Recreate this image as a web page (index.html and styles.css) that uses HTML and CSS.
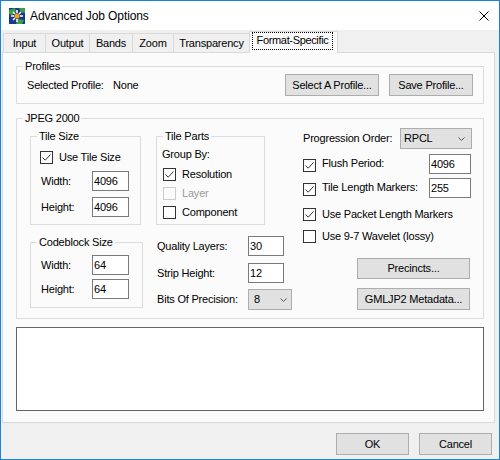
FILE: index.html
```html
<!DOCTYPE html>
<html>
<head>
<meta charset="utf-8">
<title>Advanced Job Options</title>
<link rel="stylesheet" href="styles.css">
</head>
<body>
<div class="window">
  <div class="titlebar">
    <svg class="appicon" viewBox="0 0 16 16">
      <rect width="16" height="16" fill="#17398c"/>
      <path d="M0 2 L6 0 L7 4 L3 7 L0 6 Z" fill="#3c9e46"/>
      <path d="M10 0 L16 0 L16 5 L12 4 Z" fill="#3c9e46"/>
      <path d="M9 11 L15 12 L13 16 L7 16 Z" fill="#3c9e46"/>
      <path d="M8 2 V5 M8 11 V14 M2 8 H5 M11 8 H14 M4 4 L6 6 M12 4 L10 6 M4 12 L6 10" stroke="#ffffff" stroke-width="1.6"/>
      <circle cx="8" cy="8" r="2.6" fill="#f0a21e"/>
    </svg>
    <span class="title">Advanced Job Options</span>
    <svg class="close" viewBox="0 0 10 10">
      <path d="M0.5 0.5 L9.5 9.5 M9.5 0.5 L0.5 9.5" stroke="#000" stroke-width="1" fill="none"/>
    </svg>
  </div>
  <div class="client">
    <div class="tabstrip">
      <div class="tab t-input">Input</div>
      <div class="tab t-output">Output</div>
      <div class="tab t-bands">Bands</div>
      <div class="tab t-zoom">Zoom</div>
      <div class="tab t-trans">Transparency</div>
      <div class="tab active t-format"><span class="focus">Format-Specific</span></div>
    </div>
    <div class="tabpage">
      <div class="group g-profiles">
        <span class="gtitle">Profiles</span>
        <span class="w-sel">Selected Profile:</span>
        <span>None</span>
        <button class="btn b-select">Select A Profile...</button>
        <button class="btn b-save">Save Profile...</button>
      </div>

      <div class="group g-jpeg">
        <span class="gtitle">JPEG 2000</span>

        <div class="col col-left">
          <div class="group g-tilesize">
            <span class="gtitle">Tile Size</span>
            <div class="chk r-usetile"><span class="box"><svg viewBox="0 0 11 11"><path d="M1.5 5.5 L4.2 8.2 L9.5 2.5" stroke="#333" stroke-width="1" fill="none"/></svg></span>Use Tile Size</div>
            <div class="field r-w1"><span class="flabel fl-l">Width:</span><span class="input in-l">4096</span></div>
            <div class="field r-h1"><span class="flabel fl-l">Height:</span><span class="input in-l">4096</span></div>
          </div>
          <div class="group g-codeblock">
            <span class="gtitle">Codeblock Size</span>
            <div class="field r-w2"><span class="flabel fl-l">Width:</span><span class="input in-l">64</span></div>
            <div class="field r-h2"><span class="flabel fl-l">Height:</span><span class="input in-l">64</span></div>
          </div>
        </div>

        <div class="col col-mid">
          <div class="group g-tileparts">
            <span class="gtitle">Tile Parts</span>
            <div class="groupby">Group By:</div>
            <div class="chk r-tp r-res"><span class="box"><svg viewBox="0 0 11 11"><path d="M1.5 5.5 L4.2 8.2 L9.5 2.5" stroke="#333" stroke-width="1" fill="none"/></svg></span>Resolution</div>
            <div class="chk r-tp disabled"><span class="box"></span>Layer</div>
            <div class="chk r-tp"><span class="box"></span>Component</div>
          </div>
          <div class="field r-ql"><span class="flabel fl-m">Quality Layers:</span><span class="input in-m">30</span></div>
          <div class="field r-sh"><span class="flabel fl-m">Strip Height:</span><span class="input in-m">12</span></div>
          <div class="field r-bp"><span class="flabel fl-m">Bits Of Precision:</span><span class="combo cb-bits">8<svg class="chev" viewBox="0 0 7 4"><path d="M0.5 0.5 L3.5 3.5 L6.5 0.5" stroke="#555" fill="none"/></svg></span></div>
        </div>

        <div class="col col-right">
          <div class="field r-po"><span>Progression Order:</span><span class="combo cb-po">RPCL<svg class="chev" viewBox="0 0 7 4"><path d="M0.5 0.5 L3.5 3.5 L6.5 0.5" stroke="#555" fill="none"/></svg></span></div>
          <div class="field rr r-fp"><span class="box"><svg viewBox="0 0 11 11"><path d="M1.5 5.5 L4.2 8.2 L9.5 2.5" stroke="#333" stroke-width="1" fill="none"/></svg></span><span>Flush Period:</span><span class="input in-r">4096</span></div>
          <div class="field rr r-tl"><span class="box"><svg viewBox="0 0 11 11"><path d="M1.5 5.5 L4.2 8.2 L9.5 2.5" stroke="#333" stroke-width="1" fill="none"/></svg></span><span>Tile Length Markers:</span><span class="input in-r">255</span></div>
          <div class="chk r-pl"><span class="box"><svg viewBox="0 0 11 11"><path d="M1.5 5.5 L4.2 8.2 L9.5 2.5" stroke="#333" stroke-width="1" fill="none"/></svg></span>Use Packet Length Markers</div>
          <div class="chk r-wv"><span class="box"></span>Use 9-7 Wavelet (lossy)</div>
          <button class="btn b-prec">Precincts...</button>
          <button class="btn b-gml">GMLJP2 Metadata...</button>
        </div>
      </div>

      <div class="textbox"></div>
    </div>
    <div class="footer">
      <button class="btn b-ok">OK</button>
      <button class="btn b-cancel">Cancel</button>
    </div>
  </div>
</div>
</body>
</html>
```

FILE: styles.css
```css
html, body {
  margin: 0;
  padding: 0;
  background: #ffffff;
}

.window {
  width: 500px;
  height: 460px;
  box-sizing: border-box;
  border: 1px solid #1883d7;
  background: #f0f0f0;
  display: flex;
  flex-direction: column;
  font-family: "Liberation Sans", Arial, sans-serif;
  font-size: 11px;
  line-height: 13px;
  letter-spacing: -0.2px;
  color: #000;
}

/* title bar */
.titlebar {
  flex: none;
  height: 29px;
  background: #ffffff;
  display: flex;
  align-items: center;
}
.appicon {
  width: 16px;
  height: 16px;
  margin-left: 8px;
  flex: none;
}
.title {
  margin-left: 5px;
  font-size: 12px;
  letter-spacing: -0.1px;
  padding-top: 1px;
}
.close {
  width: 10px;
  height: 10px;
  margin-left: auto;
  margin-right: 10px;
}

/* client area */
.client {
  flex: 1;
  display: flex;
  flex-direction: column;
}

.tabstrip {
  height: 22px;
  display: flex;
  align-items: flex-end;
  padding-left: 2px;
  position: relative;
  z-index: 1;
}
.tab {
  box-sizing: border-box;
  height: 19px;
  border: 1px solid #d9d9d9;
  border-bottom: none;
  background: #f0f0f0;
  margin-left: -1px;
  text-align: center;
  line-height: 18px;
}
.t-input { margin-left: 0; width: 43px; }
.t-output { width: 45px; }
.t-bands { width: 44px; }
.t-zoom { width: 42px; }
.t-trans { width: 77px; }
.t-format { width: 89px; }
.tab.active {
  height: 22px;
  margin-bottom: -1px;
  background: #fbfbfb;
}
.focus {
  display: block;
  box-sizing: border-box;
  margin-left: 2px;
  width: 81px;
  height: 18px;
  border: 1px dotted #000;
  line-height: 15px;
  text-align: center;
  letter-spacing: -0.35px;
  white-space: nowrap;
}

.tabpage {
  margin-left: 1px;
  width: 493px;
  height: 371px;
  box-sizing: border-box;
  border: 1px solid #d9d9d9;
  background: #fbfbfb;
  padding: 13px 0 0 13px;
}

/* group boxes */
.group {
  position: relative;
  box-sizing: border-box;
  border: 1px solid #dcdcdc;
}
.gtitle {
  position: absolute;
  top: -7px;
  left: 6px;
  padding: 0 2px;
  background: #fbfbfb;
  line-height: 13px;
  white-space: nowrap;
}

.g-profiles {
  width: 468px;
  height: 38px;
  display: flex;
  align-items: center;
  padding: 0 10px;
}
.w-sel {
  width: 86px;
}

/* buttons */
.btn {
  box-sizing: border-box;
  margin: 0;
  padding: 0;
  border: 1px solid #adadad;
  background: #e1e1e1;
  font-family: inherit;
  font-size: 11px;
  line-height: 13px;
  letter-spacing: -0.2px;
  color: #000;
  text-align: center;
}
.b-select {
  margin-left: auto;
  width: 94px;
  height: 22px;
}
.b-save {
  margin-left: 10px;
  width: 84px;
  height: 22px;
}

/* JPEG 2000 group */
.g-jpeg {
  margin-top: 14px;
  width: 468px;
  height: 201px;
  display: flex;
  align-items: flex-start;
  padding-left: 13px;
}
.col {
  display: flex;
  flex-direction: column;
  align-items: flex-start;
}
.col-left {
  width: 113px;
  margin-top: 17px;
}
.col-mid {
  width: 109px;
  margin-left: 13px;
  margin-top: 17px;
}
.col-right {
  width: 169px;
  margin-left: 38px;
  margin-top: 9px;
  align-items: stretch;
}

/* checkboxes */
.chk {
  display: flex;
  align-items: center;
  height: 13px;
  line-height: 13px;
  white-space: nowrap;
}
.box {
  flex: none;
  box-sizing: border-box;
  width: 13px;
  height: 13px;
  border: 1px solid #333333;
  background: #ffffff;
  margin-right: 6px;
  display: flex;
}
.box svg {
  width: 11px;
  height: 11px;
}
.chk.disabled {
  color: #9a9a9a;
}
.chk.disabled .box {
  border-color: #cccccc;
  background: #fbfbfb;
}

/* fields */
.field {
  display: flex;
  align-items: center;
  height: 20px;
  white-space: nowrap;
}
.flabel {
  flex: none;
}
.input {
  box-sizing: border-box;
  height: 20px;
  border: 1px solid #7a7a7a;
  background: #ffffff;
  padding-left: 1px;
  line-height: 18px;
}
.combo {
  box-sizing: border-box;
  display: flex;
  align-items: center;
  height: 21px;
  border: 1px solid #adadad;
  background: #e1e1e1;
}
.chev {
  width: 7px;
  height: 4px;
  margin-left: auto;
}

/* Tile Size */
.g-tilesize {
  width: 111px;
  height: 89px;
  padding-top: 14px;
}
.r-usetile {
  margin-left: 9px;
}
.fl-l {
  width: 51px;
}
.in-l {
  width: 37px;
}
.r-w1 {
  margin-top: 7px;
  margin-left: 10px;
}
.r-h1 {
  margin-top: 6px;
  margin-left: 10px;
}
.g-codeblock {
  width: 113px;
  height: 66px;
  margin-top: 17px;
  padding-top: 12px;
}
.r-w2 {
  margin-left: 10px;
}
.r-h2 {
  margin-top: 4px;
  margin-left: 10px;
}

/* Tile Parts */
.g-tileparts {
  width: 109px;
  height: 89px;
}
.groupby {
  margin-top: 11px;
  margin-left: 5px;
}
.r-tp {
  margin-left: 6px;
  margin-top: 6px;
}
.r-tp.r-res {
  margin-top: 7px;
}
.fl-m {
  width: 91px;
}
.in-m {
  width: 36px;
}
.r-ql {
  margin-top: 11px;
  margin-left: 1px;
}
.r-sh {
  margin-top: 7px;
  margin-left: 1px;
}
.r-bp {
  margin-top: 6px;
  margin-left: 1px;
  height: 21px;
}
.cb-bits {
  width: 44px;
  padding-left: 5px;
}
.cb-bits .chev {
  margin-right: 4px;
}

/* right column */
.r-po {
  height: 21px;
}
.cb-po {
  margin-left: auto;
  width: 72px;
  padding-left: 3px;
}
.cb-po .chev {
  margin-right: 6px;
}
.rr {
  align-items: flex-start;
  line-height: 19px;
}
.rr .box {
  margin-top: 5px;
}
.in-r {
  width: 42px;
  margin-left: auto;
  margin-right: 1px;
}
.r-fp {
  margin-top: 5px;
}
.r-tl {
  margin-top: 4px;
}
.r-pl {
  margin-top: 10px;
}
.r-wv {
  margin-top: 9px;
}
.b-prec {
  margin-top: 15px;
  margin-left: 54px;
  width: 113px;
  height: 21px;
}
.b-gml {
  margin-top: 9px;
  margin-left: 54px;
  width: 113px;
  height: 22px;
}

/* text area */
.textbox {
  margin-top: 8px;
  width: 468px;
  height: 84px;
  box-sizing: border-box;
  border: 1px solid #646464;
  background: #ffffff;
}

/* footer */
.footer {
  display: flex;
  justify-content: flex-end;
  padding: 10px 7px 0 0;
}
.b-ok {
  width: 73px;
  height: 22px;
}
.b-cancel {
  width: 73px;
  height: 22px;
  margin-left: 10px;
}
```
